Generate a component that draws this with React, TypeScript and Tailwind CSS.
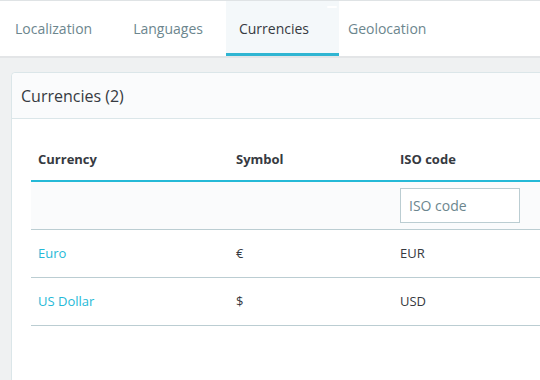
import React from 'react';

const tabs = [
  { label: 'Localization', pad: 'pl-[15px] pr-[20px]' },
  { label: 'Languages', pad: 'pl-[21px] pr-[23px]' },
  { label: 'Currencies', pad: 'pl-[13px] w-[113px]' },
  { label: 'Geolocation', pad: 'pl-[9px] pr-[20px]' },
];

const rows = [
  { name: 'Euro', symbol: '€', iso: 'EUR' },
  { name: 'US Dollar', symbol: '$', iso: 'USD' },
];

const App: React.FC = () => {
  return (
    <div
      className="w-[540px] h-[380px] overflow-hidden bg-[#eff1f2] text-[#363a41]"
      style={{ fontFamily: '"Open Sans", "Noto Sans", sans-serif' }}
    >
      {/* Tabs */}
      <div className="flex h-[58px] bg-white border-t border-[#dfe3e5] border-b-2 border-b-[#e3e5e7]">
        {tabs.map((t) => (
          <div
            key={t.label}
            className={
              'relative flex items-center text-[14px] ' +
              t.pad +
              (t.label === 'Currencies'
                ? ' bg-[#f4f8fa] text-[#363a41] border-b-[3px] border-[#2fb5d2] pt-[3px]'
                : ' text-[#6c868e]')
            }
          >
            {t.label}
            {t.label === 'Currencies' && (
              <span className="absolute top-[5px] right-[2px] w-[10px] h-[2px] rounded-full bg-white" />
            )}
          </div>
        ))}
      </div>

      {/* Card */}
      <div className="ml-[11px] mt-[14px] w-[560px] h-[320px] bg-white border border-[#dbe6e9] rounded-[4px]">
        <div className="h-[46px] bg-[#fafbfc] border-b border-[#dbe6e9] rounded-t-[4px] flex items-center pl-[9px] text-[16px]">
          Currencies (2)
        </div>

        <div className="pt-[21px] pl-[19px]">
          <div className="text-[13px]">
            {/* Header */}
            <div className="flex h-[42px] items-center font-bold border-b-2 border-[#25b9d7]">
              <div className="w-[199px] pl-[7px]">Currency</div>
              <div className="w-[164px] pl-[6px]">Symbol</div>
              <div className="pl-[6px]">ISO code</div>
            </div>
            {/* Filters */}
            <div className="flex h-[48px] bg-[#fafbfc] border-b border-[#bbcdd2] pt-[6px]">
              <div className="w-[199px]" />
              <div className="w-[164px]" />
              <div className="pl-[6px]">
                <input
                  placeholder="ISO code"
                  className="w-[120px] h-[35px] border border-[#bbcdd2] bg-white px-[8px] text-[14px] placeholder:text-[#6c868e] outline-none"
                />
              </div>
            </div>
            {rows.map((r) => (
              <div key={r.iso} className="flex h-[48px] items-center border-b border-[#bbcdd2]">
                <div className="w-[199px] pl-[7px] text-[#25b9d7]">{r.name}</div>
                <div className="w-[164px] pl-[6px]">{r.symbol}</div>
                <div className="pl-[6px]">{r.iso}</div>
              </div>
            ))}
          </div>
        </div>
      </div>
    </div>
  );
};

export default App;
